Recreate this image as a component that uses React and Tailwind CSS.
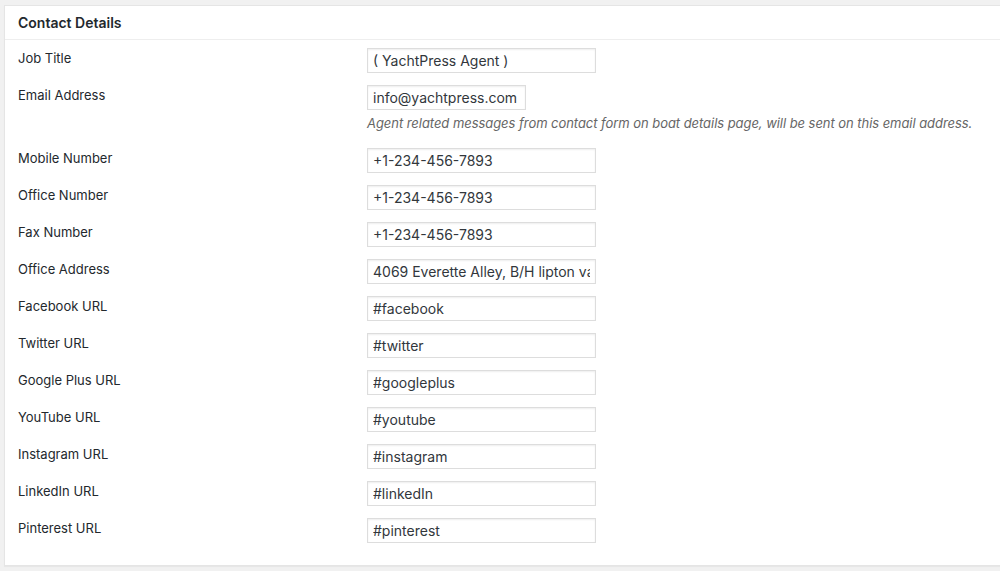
import React from "react";

const rows = [
  { label: "Job Title", value: "( YachtPress Agent )" },
  {
    label: "Email Address",
    value: "info@yachtpress.com",
    narrow: true,
    desc: "Agent related messages from contact form on boat details page, will be sent on this email address.",
  },
  { label: "Mobile Number", value: "+1-234-456-7893" },
  { label: "Office Number", value: "+1-234-456-7893" },
  { label: "Fax Number", value: "+1-234-456-7893" },
  { label: "Office Address", value: "4069 Everette Alley, B/H lipton valley" },
  { label: "Facebook URL", value: "#facebook" },
  { label: "Twitter URL", value: "#twitter" },
  { label: "Google Plus URL", value: "#googleplus" },
  { label: "YouTube URL", value: "#youtube" },
  { label: "Instagram URL", value: "#instagram" },
  { label: "LinkedIn URL", value: "#linkedIn" },
  { label: "Pinterest URL", value: "#pinterest" },
];

export default function App() {
  return (
    <div
      className="min-h-[571px] w-[1000px] overflow-hidden bg-[#f1f1f1] pt-[5px] pl-[4px]"
      style={{ fontFamily: "Inter, 'Liberation Sans', sans-serif" }}
    >
      <div className="w-[1000px] border border-[#e5e5e5] bg-white shadow-[0_1px_1px_rgba(0,0,0,0.04)]">
        <div className="flex h-[34px] items-center border-b border-[#eeeeee] pl-[13px]">
          <h2 className="text-[14px] font-semibold text-[#23282d]">Contact Details</h2>
        </div>
        <div className="pt-[8px] pb-[10px]">
          {rows.map((r) => (
            <div key={r.label} className="grid grid-cols-[362px_1fr] pb-[12px]">
              <div className="pl-[13px] text-[13px] leading-[20px] text-[#23282d]">{r.label}</div>
              <div>
                <input
                  readOnly
                  value={r.value}
                  className={`block h-[25px] ${r.narrow ? "w-[159px]" : "w-[229px]"} border border-[#dddddd] bg-white px-[5px] text-[14px] text-[#32373c] shadow-[inset_0_1px_2px_rgba(0,0,0,0.07)] outline-none`}
                  style={{ fontFamily: "Inter, 'Liberation Sans', sans-serif" }}
                />
                {r.desc && (
                  <p className="my-[4px] text-[13px] italic leading-[18px] tracking-[-0.05px] text-[#666666]">{r.desc}</p>
                )}
              </div>
            </div>
          ))}
        </div>
      </div>
    </div>
  );
}
